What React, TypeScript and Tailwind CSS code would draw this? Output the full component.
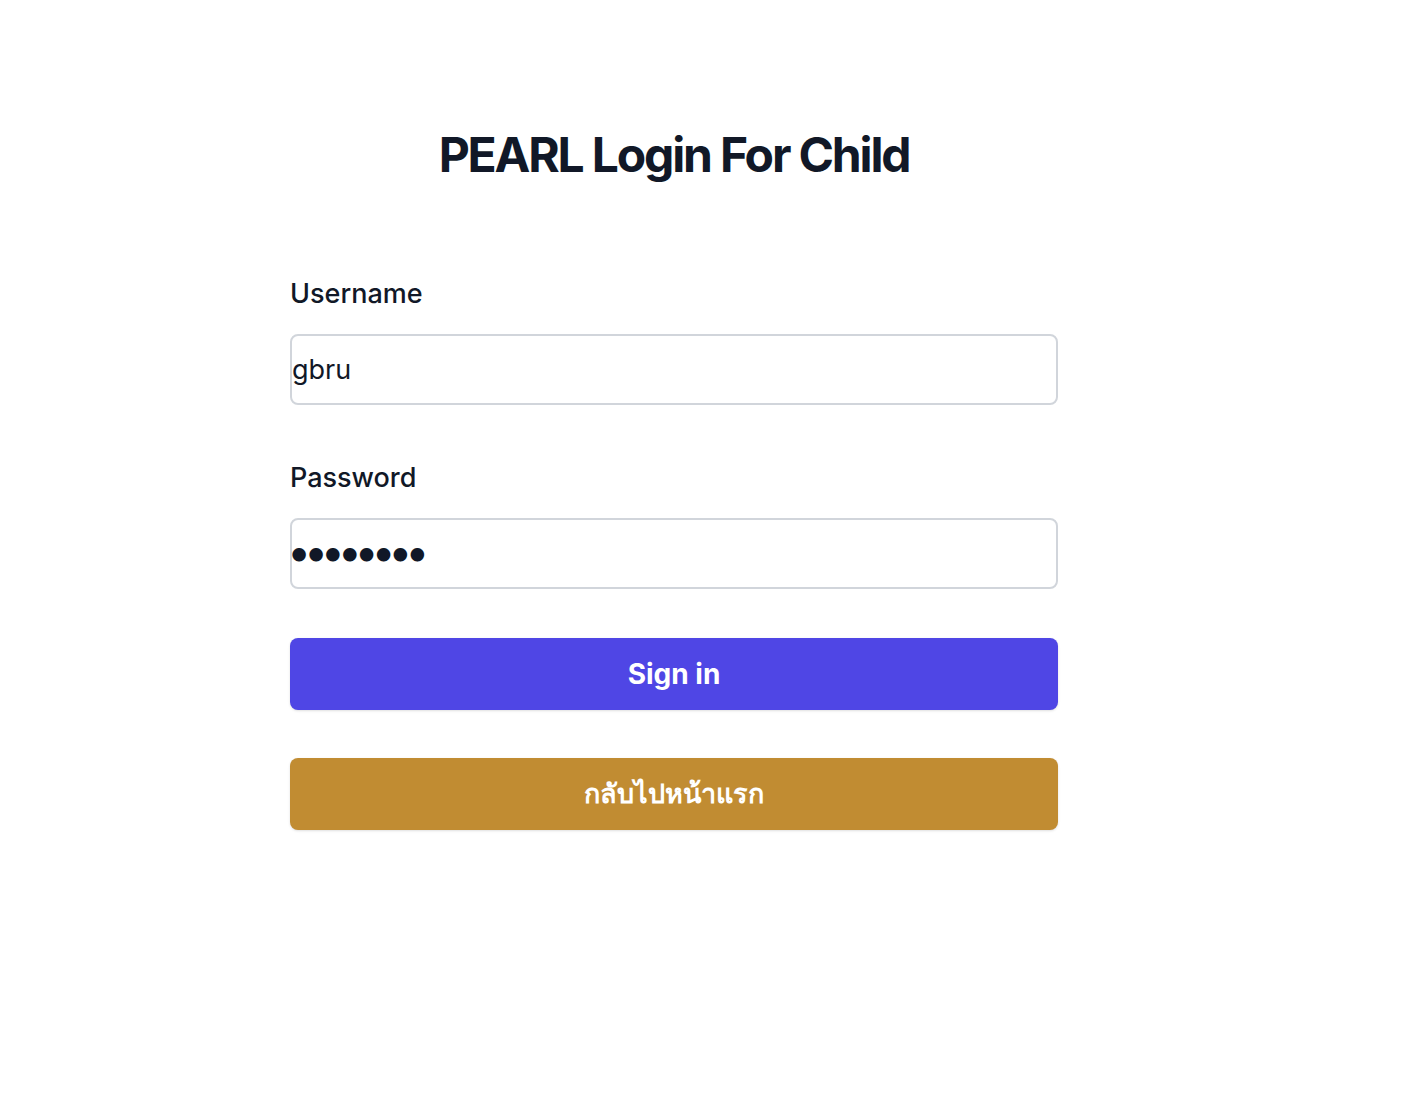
export default function App() {
    return (
        <div className="min-h-screen bg-white font-['Inter','Noto_Sans',sans-serif]">
            <div className="w-[1348px] pt-[120px]">
                <h1 className="text-center text-[48px] leading-[70px] font-bold tracking-[-0.045em] text-[#111827]">
                    PEARL Login For Child
                </h1>

                <form className="mx-auto mt-[88px] w-[768px] flex flex-col">
                    <label className="text-[27px] leading-[32px] font-medium text-[#111827]">Username</label>
                    <input
                        type="text"
                        defaultValue="gbru"
                        className="mt-[24px] h-[71px] w-full rounded-[8px] border-2 border-[#d1d5db] bg-white px-0 text-[27px] text-[#111827] outline-none"
                    />

                    <label className="mt-[57px] text-[27px] leading-[32px] font-medium text-[#111827]">Password</label>
                    <input
                        type="password"
                        defaultValue="password"
                        className="mt-[24px] h-[71px] w-full rounded-[8px] border-2 border-[#d1d5db] bg-white px-0 pb-[5px] text-[43px] tracking-[-7.3px] indent-[-5px] text-[#111827] outline-none"
                    />

                    <button
                        type="button"
                        className="mt-[49px] h-[72px] w-full rounded-[8px] bg-[#4f46e5] text-[28px] font-bold text-white shadow-sm"
                    >
                        Sign in
                    </button>
                    <button
                        type="button"
                        className="mt-[48px] h-[72px] w-full rounded-[8px] bg-[#c18c32] text-[27px] font-bold text-white shadow-sm"
                    >
                        กลับไปหน้าแรก
                    </button>
                </form>
            </div>
        </div>
    )
}
